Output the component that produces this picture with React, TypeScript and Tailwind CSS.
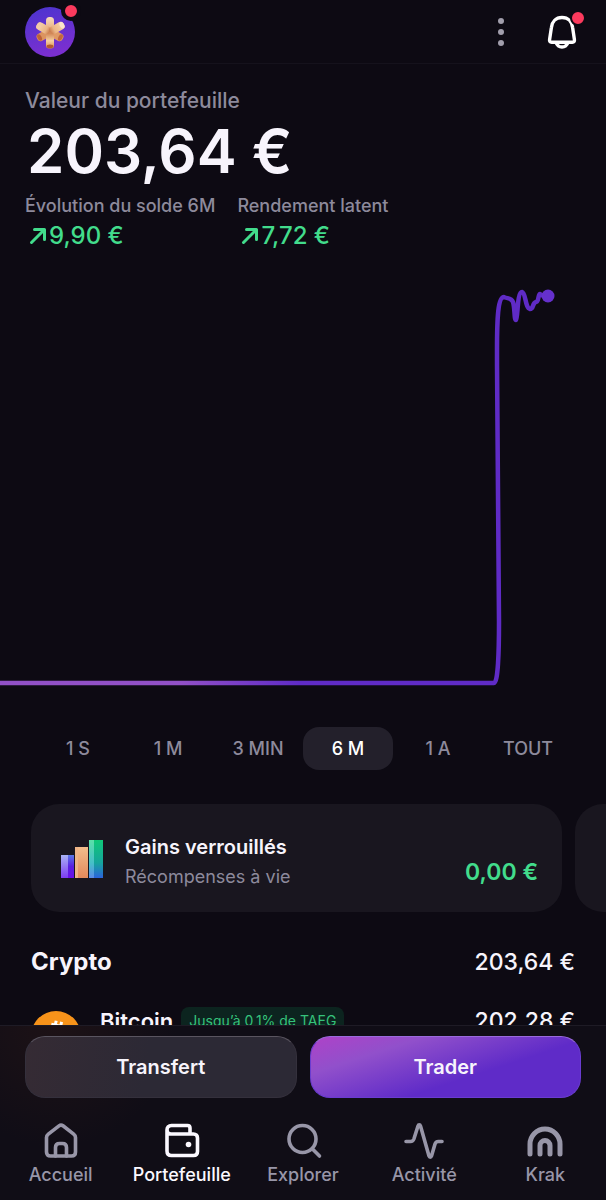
import React from "react";
import clsx from "clsx";

const ranges = ["1 S", "1 M", "3 MIN", "6 M", "1 A", "TOUT"];

const Avatar = () => (
  <svg viewBox="0 0 50 50" className="h-[50px] w-[50px]" aria-hidden="true">
    <defs>
      <linearGradient id="avatarBg" x1="0" y1="0" x2="0.3" y2="1">
        <stop offset="0" stopColor="#4a35cf" />
        <stop offset="1" stopColor="#7a2fd0" />
      </linearGradient>
      <linearGradient id="armUp" x1="0" y1="0" x2="0" y2="1">
        <stop offset="0" stopColor="#f8dcbe" />
        <stop offset="1" stopColor="#e0a070" />
      </linearGradient>
      <linearGradient id="armSide" x1="0" y1="0" x2="0" y2="1">
        <stop offset="0" stopColor="#f8d8b4" />
        <stop offset="0.7" stopColor="#eab585" />
        <stop offset="1" stopColor="#c87848" />
      </linearGradient>
      <linearGradient id="armDown" x1="0" y1="0" x2="0" y2="1">
        <stop offset="0" stopColor="#d08452" />
        <stop offset="0.5" stopColor="#f6cfa2" />
        <stop offset="1" stopColor="#d98a4e" />
      </linearGradient>
    </defs>
    <circle cx="25" cy="25" r="25" fill="url(#avatarBg)" />
    <g transform="rotate(62 25 25)">
      <rect x="21" y="26" width="8" height="13.500" rx="3.500" fill="#dc9460" />
      <ellipse cx="25" cy="36.800" rx="3.500" ry="2" fill="#bf6238" />
    </g>
    <g transform="rotate(-62 25 25)">
      <rect x="21" y="26" width="8" height="13.500" rx="3.500" fill="#e09a66" />
      <ellipse cx="25" cy="36.800" rx="3.500" ry="2" fill="#c4683c" />
    </g>
    <rect x="21" y="10" width="8" height="16" rx="3.500" fill="url(#armUp)" />
    <g transform="rotate(-60 25 25)">
      <rect x="21" y="10" width="8" height="15" rx="3.500" fill="url(#armSide)" />
      <ellipse cx="25" cy="12.200" rx="3.600" ry="2.200" fill="#f2cba6" />
    </g>
    <g transform="rotate(60 25 25)">
      <rect x="21" y="9" width="8" height="16" rx="3.500" fill="url(#armSide)" />
      <ellipse cx="25" cy="11.200" rx="3.600" ry="2.200" fill="#fbe6cc" />
    </g>
    <rect x="21" y="26" width="8" height="15.500" rx="3" fill="url(#armDown)" />
    <ellipse cx="25" cy="39.300" rx="3.400" ry="1.900" fill="#b25a30" />
  </svg>
);

const BellIcon = () => (
  <svg viewBox="0 0 32 36" className="h-9 w-8" fill="none" stroke="#fff" strokeWidth="3.400" strokeLinejoin="round" aria-hidden="true">
    <path d="M16 3.500c-6.200 0-10 4.300-10.600 10L3.600 25.500c-.3 1.800.4 2.700 2 2.700h20.800c1.600 0 2.300-.9 2-2.700L26.600 13.500C26 7.800 22.200 3.500 16 3.500Z" />
    <path d="M10 28.500c1 2.800 3.400 4.500 6 4.500s5-1.700 6-4.500" />
  </svg>
);

const BarsIcon = () => (
  <svg viewBox="0 0 42 38" className="mt-2 h-[38px] w-[42px] self-start" aria-hidden="true">
    <defs>
      <linearGradient id="barA" x1="0" y1="0" x2="0" y2="1">
        <stop offset="0" stopColor="#a9b2f5" />
        <stop offset="1" stopColor="#7d3cf0" />
      </linearGradient>
      <linearGradient id="barA2" x1="0" y1="0" x2="0" y2="1">
        <stop offset="0" stopColor="#5a78e6" />
        <stop offset="0.5" stopColor="#5a1fe0" />
        <stop offset="1" stopColor="#6a10e8" />
      </linearGradient>
      <linearGradient id="barB" x1="0" y1="0" x2="0" y2="1">
        <stop offset="0" stopColor="#f3bd8c" />
        <stop offset="1" stopColor="#e48a5c" />
      </linearGradient>
      <linearGradient id="barC" x1="0" y1="0" x2="0" y2="1">
        <stop offset="0" stopColor="#5be0a8" />
        <stop offset="0.6" stopColor="#46c0c8" />
        <stop offset="1" stopColor="#5a8ae8" />
      </linearGradient>
      <linearGradient id="barC2" x1="0" y1="0" x2="0" y2="1">
        <stop offset="0" stopColor="#10c878" />
        <stop offset="0.6" stopColor="#16a59c" />
        <stop offset="1" stopColor="#2b63dc" />
      </linearGradient>
    </defs>
    <rect x="0" y="15" width="7" height="23" fill="url(#barA)" />
    <rect x="7" y="15" width="6" height="23" fill="url(#barA2)" />
    <rect x="14" y="7" width="4" height="31" fill="#efb487" />
    <rect x="17" y="7" width="10" height="31" fill="url(#barB)" />
    <rect x="28" y="0" width="6" height="38" fill="url(#barC)" />
    <rect x="33" y="0" width="9" height="38" fill="url(#barC2)" />
  </svg>
);

const BitcoinIcon = () => (
  <svg viewBox="0 0 50 50" className="h-[50px] w-[50px] shrink-0" aria-hidden="true">
    <circle cx="25" cy="25" r="25" fill="#f7931a" />
    <g transform="rotate(12 25 25)" fill="none" stroke="#fff" strokeWidth="4">
      <path d="M18 15h9a5 5 0 0 1 0 10h-7h8a5 5 0 0 1 0 10H18M20 15v20" />
      <path d="M22 10v5M27.500 10v5M22 35v5M27.500 35v5" strokeWidth="3" />
    </g>
  </svg>
);

const ArrowUpRight = () => (
  <svg viewBox="0 0 18 18" className="h-[18px] w-[18px]" fill="none" stroke="currentColor" strokeWidth="3" strokeLinecap="round" strokeLinejoin="round" aria-hidden="true">
    <path d="M2.500 15.500L15 3M5.500 2.500h10v10" />
  </svg>
);

const Chart = () => (
  <svg viewBox="0 0 606 458" className="block h-auto w-full" fill="none" aria-hidden="true">
    <defs>
      <linearGradient id="line" gradientUnits="userSpaceOnUse" x1="180" y1="0" x2="300" y2="0">
        <stop offset="0" stopColor="#9150c6" />
        <stop offset="1" stopColor="#5f2bc6" />
      </linearGradient>
    </defs>
    <path
      d="M0 431H494C498 431 499 400 499 370C499 260 497 180 497 98C497 65 498 45 504 45C507 47 511 45 513 50C515 56 514 68 516 68C518 66 517 40 522 40C526 41 525 56 530 57C534 57 532 51 536 50C539 50 538 42 540 42C542 43 543 45 548 44"
      stroke="url(#line)"
      strokeWidth="4.500"
      strokeLinecap="round"
      strokeLinejoin="round"
    />
    <circle cx="548" cy="44" r="6.500" fill="#6530cc" />
  </svg>
);

const navItems = [
  {
    label: "Accueil",
    icon: (
      <>
        <path d="M3.500 15.500c0-1.500.6-2.500 1.800-3.400L16 3.800c1.300-1 2.700-1 4 0l10.700 8.300c1.200.9 1.800 1.900 1.800 3.400V30c0 2.500-1.300 4-4 4h-21c-2.700 0-4-1.500-4-4Z" />
        <path d="M12.500 34V25.500c0-2.700 1.300-4 4-4h3c2.700 0 4 1.300 4 4V34" />
      </>
    ),
  },
  {
    label: "Portefeuille",
    active: true,
    icon: (
      <>
        <path d="M3 12V29c0 3 1.600 4.500 4.500 4.500h22c2.500 0 4-1.300 4-4V16c0-2.600-1.500-4-4-4H7c-2.600 0-4-1.500-4-4s1.600-4.500 4.500-4.500h16c1.500 0 2.500 1 2.500 2.500v6M3 12V8" />
        <circle cx="24.500" cy="22.500" r="2.800" fill="currentColor" stroke="none" />
      </>
    ),
  },
  {
    label: "Explorer",
    icon: (
      <>
        <circle cx="17.500" cy="17" r="13.500" />
        <path d="M27.500 27L34.500 34" />
      </>
    ),
  },
  {
    label: "Activité",
    icon: (
      <path d="M0 19.500h4.500c1.800 0 2.800-.8 3.400-2.500L12 4c.5-1.500 2-1.500 2.500 0L23 34c.5 1.500 2 1.500 2.500 0L29 22c.5-1.700 1.500-2.500 3.300-2.500H36" />
    ),
  },
  {
    label: "Krak",
    icon: (
      <path
        d="M3 32V22a15 15 0 0 1 30 0V32M13 32V23.500a5 5 0 0 1 10 0V32"
        strokeWidth="5"
      />
    ),
  },
];

const Stat = ({ label, value }: { label: string; value: string }) => (
  <div>
    <div className="text-lg/6 font-medium text-[#8d8a9c]">{label}</div>
    <div className="mt-0.5 flex items-center gap-0.5 pl-1 text-2xl/8 font-medium text-[#42dc8c]">
      <ArrowUpRight />
      <span>{value}</span>
    </div>
  </div>
);

const App = () => {
  return (
    <div className="flex h-screen flex-col bg-[#0d0a13] font-['Inter',sans-serif] text-[#f7f4fc]">
      <header className="flex h-16 shrink-0 items-center justify-between border-b border-[#15121c] pr-7 pl-[25px]">
        <button aria-label="Profil" className="relative">
          <Avatar />
          <span className="absolute -top-1.5 -right-1.5 h-5 w-5 rounded-full border-4 border-[#0d0a13] bg-[#fb3a5d]" />
        </button>
        <div className="flex items-center gap-[42px]">
          <button aria-label="Plus" className="flex flex-col gap-[5px]">
            <span className="h-1.5 w-1.5 rounded-full bg-[#a19eac]" />
            <span className="h-1.5 w-1.5 rounded-full bg-[#a19eac]" />
            <span className="h-1.5 w-1.5 rounded-full bg-[#a19eac]" />
          </button>
          <button aria-label="Notifications" className="relative">
            <BellIcon />
            <span className="absolute -top-1 -right-2 h-4 w-4 rounded-full border-2 border-[#0d0a13] bg-[#fb3a5d]" />
          </button>
        </div>
      </header>

      <main className="min-h-0 flex-1 overflow-y-auto [scrollbar-width:none]">
        <section className="px-[25px] pt-[23px]">
          <h1 className="text-[21px]/7 font-medium text-[#8d8a9c]">
            Valeur du portefeuille
          </h1>
          <div className="mt-1 pl-0.5 text-[60px]/16 font-semibold">203,64 €</div>
          <div className="mt-[11px] flex gap-[22px]">
            <Stat label="Évolution du solde 6M" value="9,90 €" />
            <Stat label="Rendement latent" value="7,72 €" />
          </div>
        </section>

        <Chart />

        <div className="mt-[17px] grid grid-cols-6 px-[33px]">
          {ranges.map((range) => (
            <button
              key={range}
              className={clsx(
                "h-[43px] rounded-2xl text-lg font-medium whitespace-nowrap",
                range === "6 M" ? "bg-[#23202b] text-white" : "text-[#8d8a9c]"
              )}
            >
              {range}
            </button>
          ))}
        </div>

        <div className="mt-[34px] flex gap-[13px] overflow-x-auto pl-[31px] [scrollbar-width:none]">
          <div className="flex shrink-0 basis-[calc(100%-44px)] items-end gap-[22px] rounded-[28px] bg-[#19161f] pt-7 pr-6 pb-5 pl-[30px]">
            <BarsIcon />
            <div className="flex-1">
              <div className="text-xl/[30px] font-semibold">Gains verrouillés</div>
              <div className="text-lg/[30px] text-[#8d8a9c]">Récompenses à vie</div>
            </div>
            <div className="pb-1 text-[23px]/8 font-semibold text-[#42dc8c]">0,00 €</div>
          </div>
          <div className="shrink-0 basis-[calc(100%-44px)] rounded-[28px] bg-[#19161f]" />
        </div>

        <section className="px-[31px]">
          <div className="mt-[34px] flex items-center justify-between text-2xl/8">
            <h2 className="font-bold">Crypto</h2>
            <span className="text-[23px]/8 font-medium">203,64 €</span>
          </div>
          <div className="mt-[29px] flex h-[58px] items-center">
            <BitcoinIcon />
            <div className="ml-[19px] flex flex-1 items-center gap-2 self-start">
              <span className="text-[22px]/7 font-semibold">Bitcoin</span>
              <span className="rounded-lg bg-[#0c241f] px-2 text-sm/7 text-[#35c27b]">
                Jusqu’à 0,1% de TAEG
              </span>
            </div>
            <span className="self-start text-[23px]/7 font-medium">202,28 €</span>
          </div>
        </section>
      </main>

      <footer className="shrink-0 border-t border-[#1e1b25] bg-[#100d16] bg-[radial-gradient(circle_at_56px_0px,#1d1216,transparent_120px)] pt-2.5 pb-[13px]">
        <div className="grid grid-cols-2 gap-[13px] px-[25px] text-xl font-semibold">
          <button className="h-[62px] rounded-[20px] border border-[#34303c] border-t-[#5a5560] bg-[linear-gradient(100deg,#352b34,#2c2935_45%)]">
            Transfert
          </button>
          <button className="h-[62px] rounded-[20px] border border-[#6a3cd0] border-t-[#9a6bdc] bg-[linear-gradient(162deg,#ae42c8,#9150cb_25%,#5f2bc8_62%)]">
            Trader
          </button>
        </div>
        <nav className="mt-6 grid grid-cols-5">
          {navItems.map((item) => (
            <a
              key={item.label}
              href="#"
              className={clsx(
                "flex flex-col items-center gap-[5px] text-lg/6 font-medium",
                item.active ? "text-[#fbf8ff]" : "text-[#9896a8]"
              )}
            >
              <svg
                viewBox="0 0 36 36"
                className="h-9 w-9 overflow-visible"
                fill="none"
                stroke="currentColor"
                strokeWidth="3.600"
                strokeLinecap="round"
                strokeLinejoin="round"
                aria-hidden="true"
              >
                {item.icon}
              </svg>
              {item.label}
            </a>
          ))}
        </nav>
      </footer>
    </div>
  );
};

export default App;
